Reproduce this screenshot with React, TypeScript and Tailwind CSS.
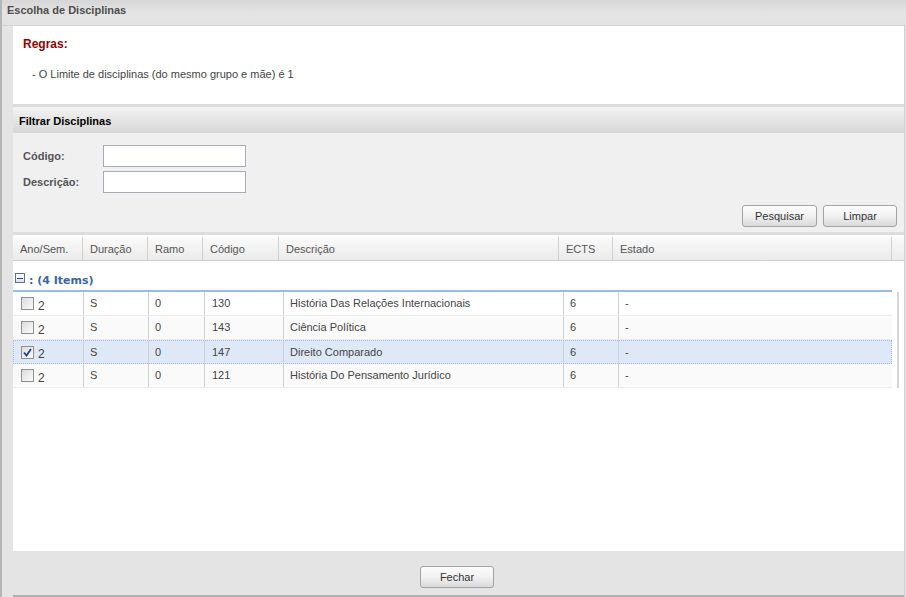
import React from 'react';

const font = { fontFamily: '"Liberation Sans", Arial, sans-serif' };

const headerCols = [
  { label: 'Ano/Sem.', w: 'w-[69px]' },
  { label: 'Duração', w: 'w-[65px]' },
  { label: 'Ramo', w: 'w-[55px]' },
  { label: 'Código', w: 'w-[76px]' },
  { label: 'Descrição', w: 'w-[280px]' },
  { label: 'ECTS', w: 'w-[54px]' },
  { label: 'Estado', w: 'w-[279px]' },
];

const rows = [
  { code: '130', desc: 'História Das Relações Internacionais', checked: false },
  { code: '143', desc: 'Ciência Política', checked: false },
  { code: '147', desc: 'Direito Comparado', checked: true },
  { code: '121', desc: 'História Do Pensamento Jurídico', checked: false },
];

const Checkbox: React.FC<{ checked: boolean }> = ({ checked }) => (
  <span className="w-[13px] h-[13px] border border-[#8e8f8f] bg-gradient-to-br from-[#dcdcdc] to-[#fbfbfb] flex items-center justify-center shrink-0">
    {checked && (
      <svg width="9" height="9" viewBox="0 0 9 9">
        <path d="M1 4.5 L3.5 7.5 L8 1" fill="none" stroke="#21409a" strokeWidth="1.8" />
      </svg>
    )}
  </span>
);

const Button: React.FC<{ label: string; w: string }> = ({ label, w }) => (
  <div
    className={`${w} h-[22px] rounded-[3px] border border-[#a3a3a3] bg-gradient-to-b from-[#fdfdfd] via-[#f1f1f1] to-[#dadada] flex items-center justify-center pt-[1px] text-[11px] text-[#333]`}
  >
    {label}
  </div>
);

export default function App() {
  return (
    <div
      className="w-[906px] h-[597px] bg-[#e4e4e4] border-l-2 border-[#b5b5b5] flex flex-col overflow-hidden"
      style={font}
    >
      {/* title bar */}
      <div className="h-[26px] shrink-0 bg-gradient-to-b from-[#d6d6d6] via-[#e4e4e4] to-[#e2e2e2] border-b border-[#d4d4d4] flex items-start pt-[2px] pl-[5px]">
        <span className="text-[11px] font-bold text-[#4d4d4d]">Escolha de Disciplinas</span>
      </div>

      <div className="flex-1 flex flex-col pl-[11px] border-r border-[#cfcfcf] mr-[1px] min-h-0">
        {/* rules */}
        <div className="h-[78px] shrink-0 bg-white pl-[10px] pt-[10px]">
          <div className="text-[12px] font-bold text-[#990000] leading-[16px]">Regras:</div>
          <div className="mt-[14px] pl-[9px] text-[11px] text-[#444] leading-[16px]">
            - O Limite de disciplinas (do mesmo grupo e mãe) é 1
          </div>
        </div>
        <div className="h-[3px] shrink-0 bg-[#dcdcdc]" />

        {/* filter */}
        <div className="h-[26px] shrink-0 bg-gradient-to-b from-[#f3f3f3] to-[#d7d7d7] flex items-center pt-[2px] pl-[6px]">
          <span className="text-[11px] font-bold text-black">Filtrar Disciplinas</span>
        </div>
        <div className="h-[99px] shrink-0 bg-[#f0f0f0] flex flex-col pt-[12px] pr-[7px]">
          <div className="flex items-center pl-[10px]">
            <span className="w-[80px] text-[11px] font-bold text-[#555]">Código:</span>
            <div className="w-[143px] h-[22px] bg-white border border-[#a8adb5]" />
          </div>
          <div className="flex items-center pl-[10px] mt-[4px]">
            <span className="w-[80px] text-[11px] font-bold text-[#555]">Descrição:</span>
            <div className="w-[143px] h-[22px] bg-white border border-[#a8adb5]" />
          </div>
          <div className="flex justify-end gap-[6px] mt-[12px]">
            <Button label="Pesquisar" w="w-[75px]" />
            <Button label="Limpar" w="w-[74px]" />
          </div>
        </div>
        <div className="h-[5px] shrink-0 border-t-[3px] border-[#dcdcdc] bg-white" />

        {/* grid */}
        <div className="flex-1 bg-white flex flex-col min-h-0">
          <div className="h-[24px] shrink-0 flex bg-gradient-to-b from-[#fafafa] to-[#ebebeb] border-b border-[#d0d0d0]">
            {headerCols.map((c, i) => (
              <div
                key={c.label}
                className={`${c.w} flex items-center pt-[2px] pl-[7px] text-[11px] text-[#555] ${i > 0 ? 'border-l border-[#d0d0d0]' : ''}`}
              >
                {c.label}
              </div>
            ))}
            <div className="flex-1 border-l border-[#d0d0d0]" />
          </div>

          <div className="h-[29px] shrink-0 flex items-end pb-[1px] pl-[2px]">
            <span className="w-[10px] h-[10px] border border-[#5f7290] bg-gradient-to-b from-white to-[#dfe3ea] flex items-center justify-center mb-[6px]">
              <span className="w-[6px] h-[1px] bg-[#2f4c79]" />
            </span>
            <span
              className="ml-[4px] text-[11px] font-bold text-[#3a66a6]"
              style={{ fontFamily: '"DejaVu Sans", Verdana, sans-serif' }}
            >
              : (4 Items)
            </span>
          </div>
          <div className="w-[879px] h-[2px] shrink-0 bg-[#99bbe8]" />

          {rows.map((r, i) => {
            const bg = r.checked ? 'bg-[#dfe8f6]' : i % 2 === 1 ? 'bg-[#fafafa]' : 'bg-white';
            const frame = r.checked
              ? 'outline outline-1 outline-dotted -outline-offset-1 outline-[#a3bae9]'
              : 'border-b border-[#ededed]';
            const cell = 'flex items-center pl-[6px] text-[11px] text-[#444] border-l border-[#d0d0d0]';
            return (
              <div key={r.code} className="flex h-[24px] shrink-0">
                <div className={`w-[879px] flex ${bg} ${frame}`}>
                  <div className="w-[70px] flex items-center pl-[8px]">
                    <Checkbox checked={r.checked} />
                    <span className="ml-[4px] mt-[4px] text-[12px] text-[#444]">2</span>
                  </div>
                  <div className={`w-[65px] ${cell}`}>S</div>
                  <div className={`w-[56px] ${cell}`}>0</div>
                  <div className={`w-[79px] ${cell} pl-[7px]`}>{r.code}</div>
                  <div className={`w-[280px] ${cell}`}>{r.desc}</div>
                  <div className={`w-[55px] ${cell} pl-[4px]`}>6</div>
                  <div className={`flex-1 ${cell}`}>-</div>
                </div>
                <div className="ml-[5px] w-[2px] bg-[#d6d6d6]" />
              </div>
            );
          })}
        </div>

        {/* footer */}
        <div className="h-[46px] shrink-0 flex items-start pt-[15px] pl-[407px] border-b-2 border-[#b0b0b0]">
          <Button label="Fechar" w="w-[74px]" />
        </div>
      </div>
    </div>
  );
}
